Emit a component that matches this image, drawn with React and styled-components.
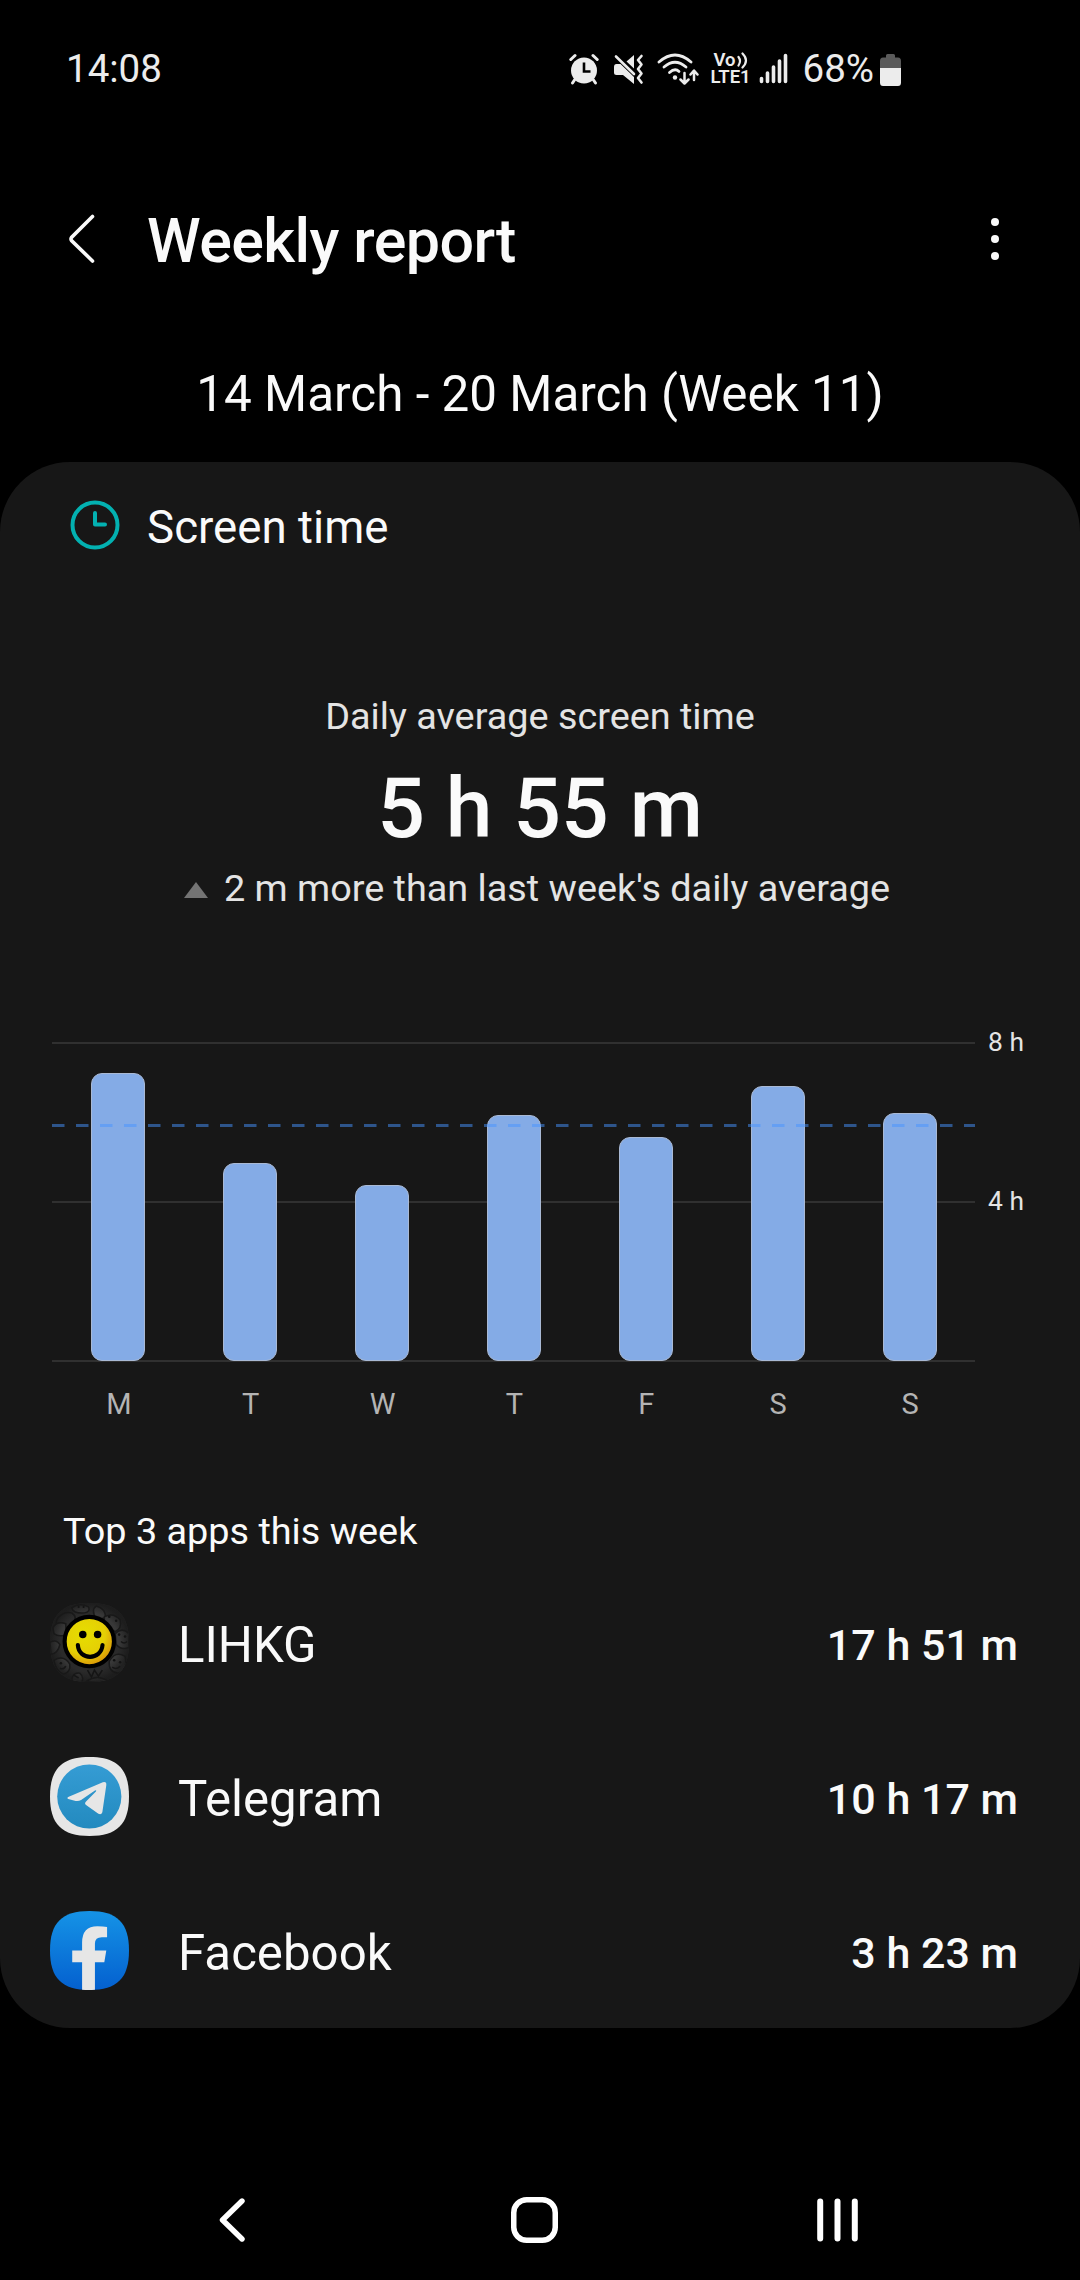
import React from "react";
import styled, { createGlobalStyle } from "styled-components";

const days = [
  { label: "M", height: 288 },
  { label: "T", height: 198 },
  { label: "W", height: 176 },
  { label: "T", height: 246 },
  { label: "F", height: 224 },
  { label: "S", height: 275 },
  { label: "S", height: 248 },
];

const SQUIRCLE =
  "M40 0C68 0 80 12 80 40C80 68 68 80 40 80C12 80 0 68 0 40C0 12 12 0 40 0Z";

function AlarmIcon() {
  return (
    <svg width="30" height="32" viewBox="0 0 30 32">
      <circle cx="15" cy="17.5" r="13" fill="#ececec" />
      <path
        d="M1.8 6.5 6 2.5M28.2 6.5 24 2.5M5.5 27 3.5 30M24.5 27 26.5 30"
        stroke="#ececec"
        strokeWidth="3"
        strokeLinecap="round"
      />
      <path d="M15 9.5V18.5H21.5" stroke="#000" strokeWidth="2.6" fill="none" />
    </svg>
  );
}

function MuteIcon() {
  return (
    <svg width="31" height="32" viewBox="0 0 31 32">
      <path d="M1 14Q1 11 3.5 11H7.5L21 24V31L10 22H3.5Q1 22 1 19.5Z" fill="#ececec" />
      <path d="M21 2V15.5L13.5 8.5Z" fill="#ececec" />
      <path d="M3 3.5 21 21" stroke="#ececec" strokeWidth="2.6" strokeLinecap="round" />
      <path
        d="M28.5 3 25 7 28.5 11.5 25 16 28.5 20.5 25 25 28.5 29.5"
        stroke="#ececec"
        strokeWidth="2.6"
        fill="none"
        strokeLinecap="round"
        strokeLinejoin="round"
      />
    </svg>
  );
}

function WifiIcon() {
  return (
    <svg width="42" height="32" viewBox="0 0 42 32">
      <g stroke="#ececec" fill="none" strokeWidth="2.8" strokeLinecap="round" strokeLinejoin="round">
        <path d="M2 9Q18 -5 34 9" />
        <path d="M7 14Q18 4.5 29 14" />
        <path d="M12.5 19.5Q18 14.5 22 18.5" />
        <path d="M27.5 20V30M23.5 26.5 27.5 30.5 31.5 26.5" strokeWidth="2.5" />
        <path d="M37 27V18M33.5 21.5 37 17.5 40.5 21.5" strokeWidth="2.5" />
      </g>
      <circle cx="18" cy="24.5" r="2.2" fill="#ececec" />
    </svg>
  );
}

function SignalIcon() {
  return (
    <svg width="29" height="32" viewBox="0 0 29 32">
      <path
        d="M2.5 25.5V28.5M8.5 20V28.5M14.5 14V28.5M20.5 8V28.5M26.5 2.5V28.5"
        stroke="#ececec"
        strokeWidth="3.6"
        strokeLinecap="round"
      />
    </svg>
  );
}

function BatteryIcon() {
  return (
    <svg width="21" height="33" viewBox="0 0 21 33">
      <path d="M0 15V8Q0 4.5 3 4.5H6V2.5Q6 1 7.5 1H13.5Q15 1 15 2.5V4.5H18Q21 4.5 21 8V15Z" fill="#5a5a5a" />
      <path d="M0 15H21V29.5Q21 33 18 33H3Q0 33 0 29.5Z" fill="#ececec" />
    </svg>
  );
}

function ClockIcon() {
  return (
    <svg width="50" height="50" viewBox="0 0 50 50" fill="none" stroke="#03b1b1">
      <circle cx="25" cy="25" r="22.5" strokeWidth="4" />
      <path d="M25 13V24.5H35" strokeWidth="4" strokeLinecap="round" strokeLinejoin="round" />
    </svg>
  );
}

function LihkgIcon() {
  return (
    <svg width="79" height="79" viewBox="0 0 80 80">
      <defs>
        <radialGradient id="smile" cx="0.4" cy="0.35" r="0.7">
          <stop offset="0" stopColor="#e6de00" />
          <stop offset="0.6" stopColor="#e5cf05" />
          <stop offset="1" stopColor="#d98c08" />
        </radialGradient>
        <radialGradient id="shade">
          <stop offset="0.75" stopColor="#171717" stopOpacity="0" />
          <stop offset="1" stopColor="#171717" stopOpacity="0.7" />
        </radialGradient>
        <clipPath id="round">
          <path d={SQUIRCLE} />
        </clipPath>
      </defs>
      <g clipPath="url(#round)">
        <rect width="80" height="80" fill="#2a2a2a" />
        <g fill="#383838" stroke="#191919" strokeWidth="1.5">
          <path d="M8 15Q14 8 22 10Q28 14 24 20L12 28Q3 22 8 15Z" fill="#2b2b2b" />
          <path d="M22 5Q30 -1 39 4Q41 9 35 10Q24 11 22 5Z" />
          <path d="M47 17Q41 7 47 3Q57 6 56 15Z" />
          <path d="M55 14Q64 9 71 17Q73 26 66 29L55 22Z" />
          <path d="M3 25Q7 18 16 21V32Q9 35 4 31Z" />
          <path d="M66 31Q73 24 80 31V45Q72 48 67 42Z" />
          <path d="M0 40Q6 36 10 42Q8 51 1 52Z" />
          <path d="M60 59Q66 48 76 54Q79 68 69 71Q59 70 60 59Z" />
          <path d="M4 58Q14 52 20 62Q21 70 14 72Q6 69 4 58Z" />
          <path d="M22 80Q22 70 30 71Q35 75 32 80ZM36 80Q48 71 60 80Z" />
        </g>
        <path
          d="M38 68 42 75 45 68 49 74 53 68M24 73 29 76M63 65Q67 68 71 64M72 39Q75 42 78 39M10 66Q14 68 16 64"
          fill="none"
          stroke="#141414"
          strokeWidth="1.6"
        />
        <g fill="#101010">
          <circle cx="29" cy="4" r="1.1" />
          <circle cx="34" cy="4" r="1.1" />
          <circle cx="60" cy="14" r="1.3" />
          <circle cx="67" cy="18" r="1.3" />
          <circle cx="70" cy="32" r="1.3" />
          <circle cx="76" cy="34" r="1.3" />
          <circle cx="65" cy="58" r="1.3" />
          <circle cx="71" cy="60" r="1.3" />
          <circle cx="11" cy="61" r="1.3" />
        </g>
        <rect width="80" height="80" fill="url(#shade)" />
      </g>
      <circle cx="39.8" cy="39" r="25" fill="url(#smile)" stroke="#000" strokeWidth="4.2" />
      <circle cx="33.2" cy="32" r="3.8" />
      <circle cx="48.2" cy="32" r="3.8" />
      <path d="M28.2 42.5C29 58.5 52 58.5 53.2 42.5" fill="none" stroke="#000" strokeWidth="4.2" strokeLinecap="round" />
    </svg>
  );
}

function TelegramIcon() {
  return (
    <svg width="79" height="79" viewBox="0 0 80 80">
      <defs>
        <linearGradient id="sky" x1="0" y1="0" x2="0" y2="1">
          <stop offset="0" stopColor="#359cd4" />
          <stop offset="1" stopColor="#238abf" />
        </linearGradient>
      </defs>
      <path d={SQUIRCLE} fill="#e6e6e6" />
      <circle cx="39.8" cy="40" r="32.5" fill="url(#sky)" />
      <path
        d="M19 40.2 53.5 25.5Q57.5 24.5 57 28.5L53 56Q52 59 49 57.5L36.5 48.5Q34.5 47 36.5 45L46.5 35Q47.5 33 45.5 34L31.5 43.5Q29 45 26 44.5L18.5 42.5Q16.5 41.5 19 40.2Z"
        fill="#e6e6e6"
      />
    </svg>
  );
}

function FacebookIcon() {
  return (
    <svg width="79" height="79" viewBox="0 0 80 80">
      <defs>
        <linearGradient id="blue" x1="0" y1="0" x2="0" y2="1">
          <stop offset="0" stopColor="#1593e6" />
          <stop offset="1" stopColor="#0460cf" />
        </linearGradient>
      </defs>
      <path d={SQUIRCLE} fill="url(#blue)" />
      <path
        d="M32.5 79.7V52H22.5V40H32.5V32Q32.5 15.5 48 15.5Q54 15.5 57.8 16.3V26.5H52.5Q45.5 26.5 45.5 33V40H57L55 52H45.5V79.7Q39 80.2 32.5 79.7Z"
        fill="#e6e6e6"
      />
    </svg>
  );
}

const apps = [
  { name: "LIHKG", time: "17 h 51 m", Icon: LihkgIcon },
  { name: "Telegram", time: "10 h 17 m", Icon: TelegramIcon },
  { name: "Facebook", time: "3 h 23 m", Icon: FacebookIcon },
];

function App() {
  return (
    <Screen>
      <GlobalStyle />
      <StatusBar>
        <StatusText>14:08</StatusText>
        <StatusIcons>
          <SoundIcons>
            <AlarmIcon />
            <MuteIcon />
          </SoundIcons>
          <WifiIcon />
          <Volte>
            <Voice>
              Vo
              <svg width="11" height="17" viewBox="0 0 11 17" fill="none">
                <path
                  d="M1.5 5Q4.5 9 1.5 13.5M5.5 1.5Q12.5 8.5 5.5 15.5"
                  stroke="#ececec"
                  strokeWidth="2.2"
                  strokeLinecap="round"
                />
              </svg>
            </Voice>
            <span>LTE1</span>
          </Volte>
          <SignalIcon />
          <Percent>68%</Percent>
          <BatteryIcon />
        </StatusIcons>
      </StatusBar>
      <Header>
        <svg width="26" height="50" viewBox="0 0 26 50" fill="none">
          <path
            d="M23.5 2.5 2.5 23.5Q1.5 25 2.5 26.5L23.5 47"
            stroke="#fafafa"
            strokeWidth="3.6"
            strokeLinecap="round"
          />
        </svg>
        <Title>Weekly report</Title>
        <svg width="8" height="42" viewBox="0 0 8 42" fill="#fafafa">
          <circle cx="4" cy="4" r="4" />
          <circle cx="4" cy="21" r="4" />
          <circle cx="4" cy="38" r="4" />
        </svg>
      </Header>
      <Week>14 March - 20 March (Week 11)</Week>
      <Card>
        <CardHeader>
          <ClockIcon />
          <CardTitle>Screen time</CardTitle>
        </CardHeader>
        <Summary>
          <Caption>Daily average screen time</Caption>
          <Average>5 h 55 m</Average>
          <Change>
            <svg width="24" height="16" viewBox="0 0 24 16">
              <path d="M12 0 24 16H0Z" fill="#747474" />
            </svg>
            2 m more than last week's daily average
          </Change>
        </Summary>
        <Chart>
          <Plot>
            <GridLine $top={0} />
            <GridLine $top={159} />
            <GridLine $top={318} />
            {days.map((day, i) => (
              <Column key={i}>
                <Bar style={{ height: day.height }} />
              </Column>
            ))}
            <AverageLine width="923" height="3">
              <line
                x1="0"
                y1="1.5"
                x2="923"
                y2="1.5"
                stroke="#4694ff"
                strokeOpacity="0.5"
                strokeWidth="3"
                strokeDasharray="12.5 11.5"
              />
            </AverageLine>
          </Plot>
          <Scale>
            <span>8 h</span>
            <span>4 h</span>
          </Scale>
        </Chart>
        <Days>
          {days.map((day, i) => (
            <span key={i}>{day.label}</span>
          ))}
        </Days>
        <ListTitle>Top 3 apps this week</ListTitle>
        {apps.map(({ name, time, Icon }) => (
          <AppRow key={name}>
            <Icon />
            <AppName>{name}</AppName>
            <AppTime>{time}</AppTime>
          </AppRow>
        ))}
      </Card>
      <NavBar>
        <svg width="26" height="46" viewBox="0 0 26 46" fill="none">
          <path
            d="M23 4 3.5 23 23 42"
            stroke="#fff"
            strokeWidth="5.4"
            strokeLinecap="round"
            strokeLinejoin="round"
          />
        </svg>
        <HomeIcon width="47" height="46" viewBox="0 0 47 46" fill="none">
          <rect x="2.75" y="2.75" width="41.5" height="40.5" rx="13" stroke="#fff" strokeWidth="5.5" />
        </HomeIcon>
        <svg width="41" height="46" viewBox="0 0 41 46">
          <path d="M3.2 4.5V41.5M20.5 4.5V41.5M37.8 4.5V41.5" stroke="#fff" strokeWidth="6" strokeLinecap="round" />
        </svg>
      </NavBar>
    </Screen>
  );
}

export default App;

const GlobalStyle = createGlobalStyle`
  body {
    margin: 0;
    background: #000;
  }
  svg {
    display: block;
    flex-shrink: 0;
  }
`;

const Screen = styled.div`
  width: 1080px;
  height: 2280px;
  display: flex;
  flex-direction: column;
  background: #000;
  color: #fafafa;
  font-family: Roboto, sans-serif;
  overflow: hidden;
  white-space: nowrap;
`;

const StatusBar = styled.div`
  height: 138px;
  box-sizing: border-box;
  padding: 0 179px 0 66px;
  display: flex;
  align-items: center;
  justify-content: space-between;
  color: #ececec;
`;

const StatusText = styled.span`
  font-size: 38.5px;
  line-height: 46px;
`;

const StatusIcons = styled.div`
  display: flex;
  align-items: center;
`;

const SoundIcons = styled.div`
  display: flex;
  gap: 14px;
  margin-right: 13px;
`;

const Volte = styled.div`
  display: flex;
  flex-direction: column;
  align-items: center;
  width: 40px;
  margin: 0 8px 0 12px;
  font-size: 18.5px;
  font-weight: 600;
  line-height: 17px;
`;

const Voice = styled.span`
  display: flex;
  gap: 1px;
`;

const Percent = styled.span`
  margin: 0 6px 0 15px;
  font-size: 38.5px;
  line-height: 46px;
`;

const Header = styled.header`
  height: 204px;
  box-sizing: border-box;
  padding: 0 81px 3px 69px;
  display: flex;
  align-items: center;
`;

const Title = styled.h1`
  flex: 1;
  margin: 0 0 0 52px;
  padding-top: 5px;
  font-size: 61px;
  font-weight: 500;
  line-height: 72px;
  letter-spacing: -0.6px;
`;

const Week = styled.div`
  height: 120px;
  font-size: 49.4px;
  line-height: 105px;
  text-align: center;
`;

const Card = styled.section`
  height: 1566px;
  box-sizing: border-box;
  border-radius: 70px;
  background: #171717;
`;

const CardHeader = styled.div`
  display: flex;
  align-items: center;
  height: 126px;
  padding-left: 70px;
`;

const CardTitle = styled.h2`
  margin: 4px 0 0 27px;
  font-size: 45.7px;
  font-weight: 400;
`;

const Summary = styled.div`
  display: flex;
  flex-direction: column;
  align-items: center;
  padding-top: 105px;
`;

const Caption = styled.div`
  font-size: 37.8px;
  line-height: 46px;
  color: #e4e4e4;
`;

const Change = styled(Caption)`
  display: flex;
  align-items: center;
  gap: 16px;
  padding-right: 6px;

  svg {
    margin-top: 4px;
  }
`;

const Average = styled.div`
  height: 126px;
  font-size: 84px;
  font-weight: 500;
  line-height: 140px;
`;

const Chart = styled.div`
  display: flex;
  height: 319px;
  margin: 131px 0 0 52px;
`;

const Plot = styled.div`
  position: relative;
  display: grid;
  grid-template-columns: repeat(7, 1fr);
  width: 923px;
`;

const GridLine = styled.div`
  position: absolute;
  left: 0;
  right: 0;
  top: ${(props) => props.$top}px;
  height: 2px;
  background: #303030;
`;

const Column = styled.div`
  position: relative;
  display: flex;
  align-items: flex-end;
  justify-content: center;
`;

const Bar = styled.div`
  width: 54px;
  box-sizing: border-box;
  margin-left: 1px;
  border: 1px solid #a9b9d4;
  border-radius: 11px;
  background: #84abe6;
`;

const AverageLine = styled.svg`
  position: absolute;
  left: 0;
  top: 82px;
`;

const Scale = styled.div`
  display: grid;
  grid-template-rows: 159px 159px;
  margin: -16px 0 0 13px;
  font-size: 26.4px;
  line-height: 32px;
  color: #e4e4e4;
`;

const Days = styled.div`
  display: grid;
  grid-template-columns: repeat(7, 1fr);
  width: 923px;
  margin: 26px 0 0 53px;
  font-size: 29px;
  line-height: 34px;
  text-align: center;
  color: #b4b4b4;
`;

const ListTitle = styled.h3`
  margin: 87px 0 11px 63px;
  font-size: 37.8px;
  font-weight: 400;
  line-height: 46px;
`;

const AppRow = styled.div`
  display: flex;
  align-items: center;
  height: 154px;
  padding: 0 62px 0 50px;
`;

const AppName = styled.span`
  flex: 1;
  margin: 6px 0 0 49px;
  font-size: 49.2px;
`;

const AppTime = styled.span`
  margin-top: 6px;
  font-size: 43px;
  font-weight: 500;
`;

const NavBar = styled.nav`
  display: flex;
  align-items: center;
  justify-content: space-between;
  margin-top: 169px;
  padding: 0 222px 0 219px;
`;

const HomeIcon = styled.svg`
  margin-left: 7px;
`;
